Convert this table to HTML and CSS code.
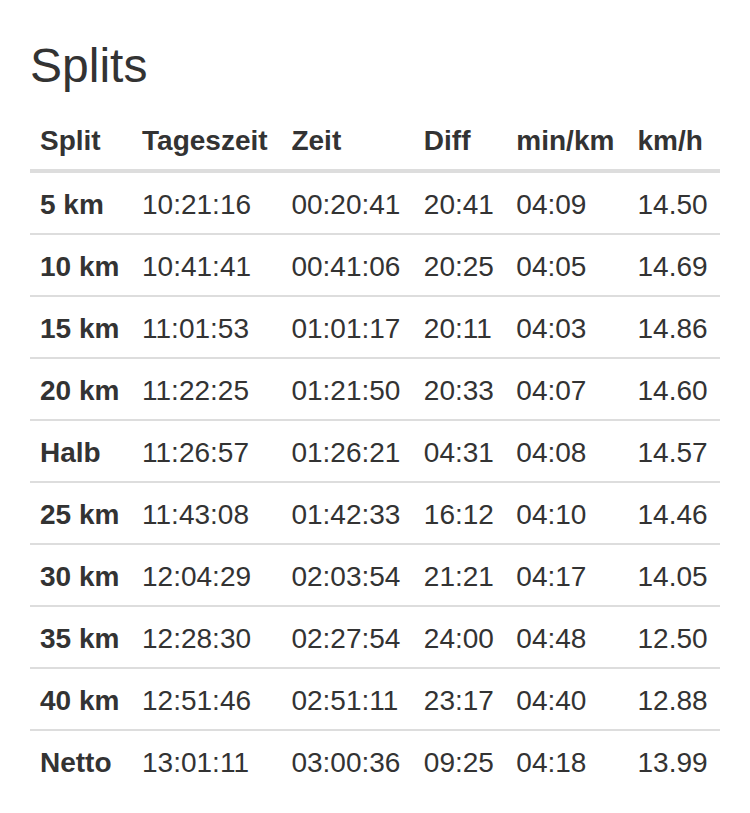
FILE: index.html
```html
<!DOCTYPE html>
<html lang="de">
<head>
<meta charset="utf-8">
<title>Splits</title>
<link rel="stylesheet" href="styles.css">
</head>
<body>
<div class="container">
  <h3 class="title">Splits</h3>
  <table class="splits">
    <thead>
      <tr><th>Split</th><th>Tageszeit</th><th>Zeit</th><th>Diff</th><th>min/km</th><th>km/h</th></tr>
    </thead>
    <tbody>
      <tr><th>5 km</th><td>10:21:16</td><td>00:20:41</td><td>20:41</td><td>04:09</td><td>14.50</td></tr>
      <tr><th>10 km</th><td>10:41:41</td><td>00:41:06</td><td>20:25</td><td>04:05</td><td>14.69</td></tr>
      <tr><th>15 km</th><td>11:01:53</td><td>01:01:17</td><td>20:11</td><td>04:03</td><td>14.86</td></tr>
      <tr><th>20 km</th><td>11:22:25</td><td>01:21:50</td><td>20:33</td><td>04:07</td><td>14.60</td></tr>
      <tr><th>Halb</th><td>11:26:57</td><td>01:26:21</td><td>04:31</td><td>04:08</td><td>14.57</td></tr>
      <tr><th>25 km</th><td>11:43:08</td><td>01:42:33</td><td>16:12</td><td>04:10</td><td>14.46</td></tr>
      <tr><th>30 km</th><td>12:04:29</td><td>02:03:54</td><td>21:21</td><td>04:17</td><td>14.05</td></tr>
      <tr><th>35 km</th><td>12:28:30</td><td>02:27:54</td><td>24:00</td><td>04:48</td><td>12.50</td></tr>
      <tr><th>40 km</th><td>12:51:46</td><td>02:51:11</td><td>23:17</td><td>04:40</td><td>12.88</td></tr>
      <tr><th>Netto</th><td>13:01:11</td><td>03:00:36</td><td>09:25</td><td>04:18</td><td>13.99</td></tr>
    </tbody>
  </table>
</div>
</body>
</html>
```
FILE: styles.css
```css
html, body {
  margin: 0;
  padding: 0;
  background: #fff;
}
body {
  font-family: "Liberation Sans", Arial, Helvetica, sans-serif;
  font-size: 28px;
  line-height: 40px;
  color: #333;
}
.container {
  padding: 0 30px;
}
.title {
  font-size: 48px;
  font-weight: 500;
  line-height: 1.1;
  margin: 40px 0 16px;
}
.splits {
  width: 100%;
  border-collapse: collapse;
  border-spacing: 0;
  margin-bottom: 20px;
}
.splits th,
.splits td {
  padding: 12px 10px 8px;
  text-align: left;
  vertical-align: top;
  border-top: 2px solid #ddd;
}
.splits th {
  font-weight: bold;
}
.splits thead th {
  vertical-align: bottom;
  border-top: 0;
  border-bottom: 4px solid #ddd;
}
.splits tbody tr:first-child th,
.splits tbody tr:first-child td {
  border-top: 0;
}
```
